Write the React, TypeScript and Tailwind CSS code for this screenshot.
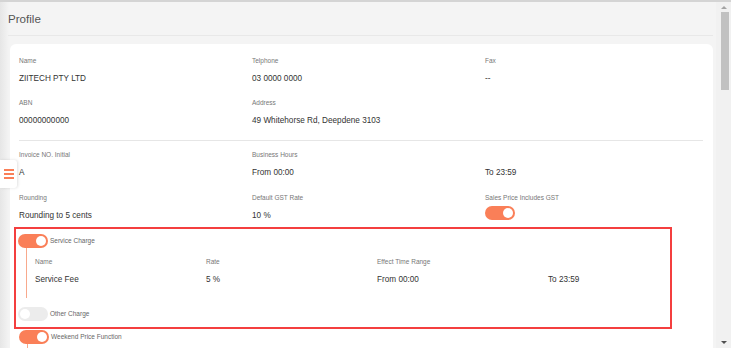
import React from 'react';

const ORANGE = 'bg-[#fa7f58]';

function Toggle({ on }: { on: boolean }) {
  return (
    <div
      className={
        on
          ? `relative w-[30px] h-[14px] rounded-full ${ORANGE}`
          : 'relative w-[30px] h-[14px] rounded-full bg-[#ececec]'
      }
    >
      <div
        className={
          on
            ? 'absolute top-[2px] right-[2px] w-[10px] h-[10px] rounded-full bg-white'
            : 'absolute top-[2px] left-[2px] w-[10px] h-[10px] rounded-full bg-white'
        }
      />
    </div>
  );
}

function Field({ label, value, mb = 'mb-[14px]' }: { label: string; value?: React.ReactNode; mb?: string }) {
  return (
    <div className={mb}>
      <div className="h-[10px] leading-[10px] text-[6.5px] text-[#777]">{label}</div>
      <div className="mt-[8px] h-[10px] leading-[10px] text-[8.2px] text-[#333]">{value}</div>
    </div>
  );
}

function ToggleRow({ on, label }: { on: boolean; label: string }) {
  return (
    <div className="flex items-center h-[14px]">
      <Toggle on={on} />
      <span className="ml-[2px] text-[6.5px] text-[#666]">{label}</span>
    </div>
  );
}

export default function App() {
  return (
    <div
      className="relative flex w-[731px] h-[348px] overflow-hidden bg-[#f4f4f4] border-t-2 border-[#d4d4d4]"
      style={{ fontFamily: '"Liberation Sans", Arial, sans-serif' }}
    >
      {/* left shadow */}
      <div className="absolute left-0 top-0 bottom-0 w-[9px] bg-gradient-to-r from-[#e6e6e6] to-[#f4f4f4]" />

      {/* main */}
      <div className="relative flex-1 pl-[8px] pr-[3px]">
        <div className="h-[33px] flex items-center text-[11.6px] text-[#555] pt-[1px]">Profile</div>
        <div className="h-px bg-[#e8e8e8]" />

        <div className="mt-[8px] ml-[2px] bg-white rounded-[6px] pl-[9px] pr-[10px] pt-[12px] h-[320px]">
          <div className="grid grid-cols-[233px_233px_1fr]">
            <Field label="Name" value="ZIITECH PTY LTD" />
            <Field label="Telphone" value="03 0000 0000" />
            <Field label="Fax" value="--" />
            <Field label="ABN" value="00000000000" />
            <Field label="Address" value="49 Whitehorse Rd, Deepdene 3103" />
            <div />
          </div>
          <div className="h-px bg-[#e6e6e6]" />
          <div className="grid grid-cols-[233px_233px_1fr] mt-[9px]">
            <Field label="Invoice NO. Initial" value="A" mb="mb-[15px]" />
            <Field label="Business Hours" value="From 00:00" mb="mb-[15px]" />
            <Field label="" value="To 23:59" mb="mb-[15px]" />
            <Field label="Rounding" value="Rounding to 5 cents" mb="mb-0" />
            <Field label="Default GST Rate" value="10 %" mb="mb-0" />
            <div>
              <div className="h-[10px] leading-[10px] text-[6.5px] text-[#777]">Sales Price Includes GST</div>
              <div className="mt-[3px]">
                <Toggle on />
              </div>
            </div>
          </div>

          {/* highlighted charges block */}
          <div className="mt-[6px] -ml-[5px] w-[658px] border-2 border-[#f43f3f] pl-[2px] pt-[5px] pb-[6px]">
            <ToggleRow on label="Service Charge" />
            <div className="ml-[8px] border-l border-[#f8a98c] h-[50px] pl-[8px] pt-[9px]">
              <div className="grid grid-cols-[171px_171px_171px_1fr]">
                <Field label="Name" value="Service Fee" mb="mb-0" />
                <Field label="Rate" value="5 %" mb="mb-0" />
                <Field label="Effect Time Range" value="From 00:00" mb="mb-0" />
                <Field label="" value="To 23:59" mb="mb-0" />
              </div>
            </div>
            <div className="mt-[9px]">
              <ToggleRow on={false} label="Other Charge" />
            </div>
          </div>
          <div className="mt-px">
            <ToggleRow on label="Weekend Price Function" />
            <div className="ml-[8px] border-l border-[#f8a98c] h-[40px]" />
          </div>
        </div>
      </div>

      {/* sidebar tab */}
      <div className="absolute left-0 top-[158px] w-[17px] h-[28px] bg-white rounded-r-[3px] shadow-[1px_0_3px_rgba(0,0,0,0.12)] flex flex-col justify-center gap-[2.5px] pl-[4px]">
        <div className="w-[10px] h-[1.5px] bg-[#fa7f58]" />
        <div className="w-[10px] h-[1.5px] bg-[#fa7f58]" />
        <div className="w-[10px] h-[1.5px] bg-[#fa7f58]" />
      </div>

      {/* scrollbar */}
      <div className="relative w-[15px] bg-[#f1f1f1] flex flex-col items-center">
        <div className="h-[10px] flex items-center justify-center">
          <div className="w-0 h-0 border-l-[3px] border-r-[3px] border-b-[3px] border-l-transparent border-r-transparent border-b-[#a3a3a3]" />
        </div>
        <div className="w-[8px] h-[78px] bg-[#c1c1c1] ml-[2px]" />
        <div className="flex-1" />
        <div className="h-[12px] flex items-center justify-center">
          <div className="w-0 h-0 border-l-[3px] border-r-[3px] border-t-[3px] border-l-transparent border-r-transparent border-t-[#505050]" />
        </div>
      </div>
    </div>
  );
}
